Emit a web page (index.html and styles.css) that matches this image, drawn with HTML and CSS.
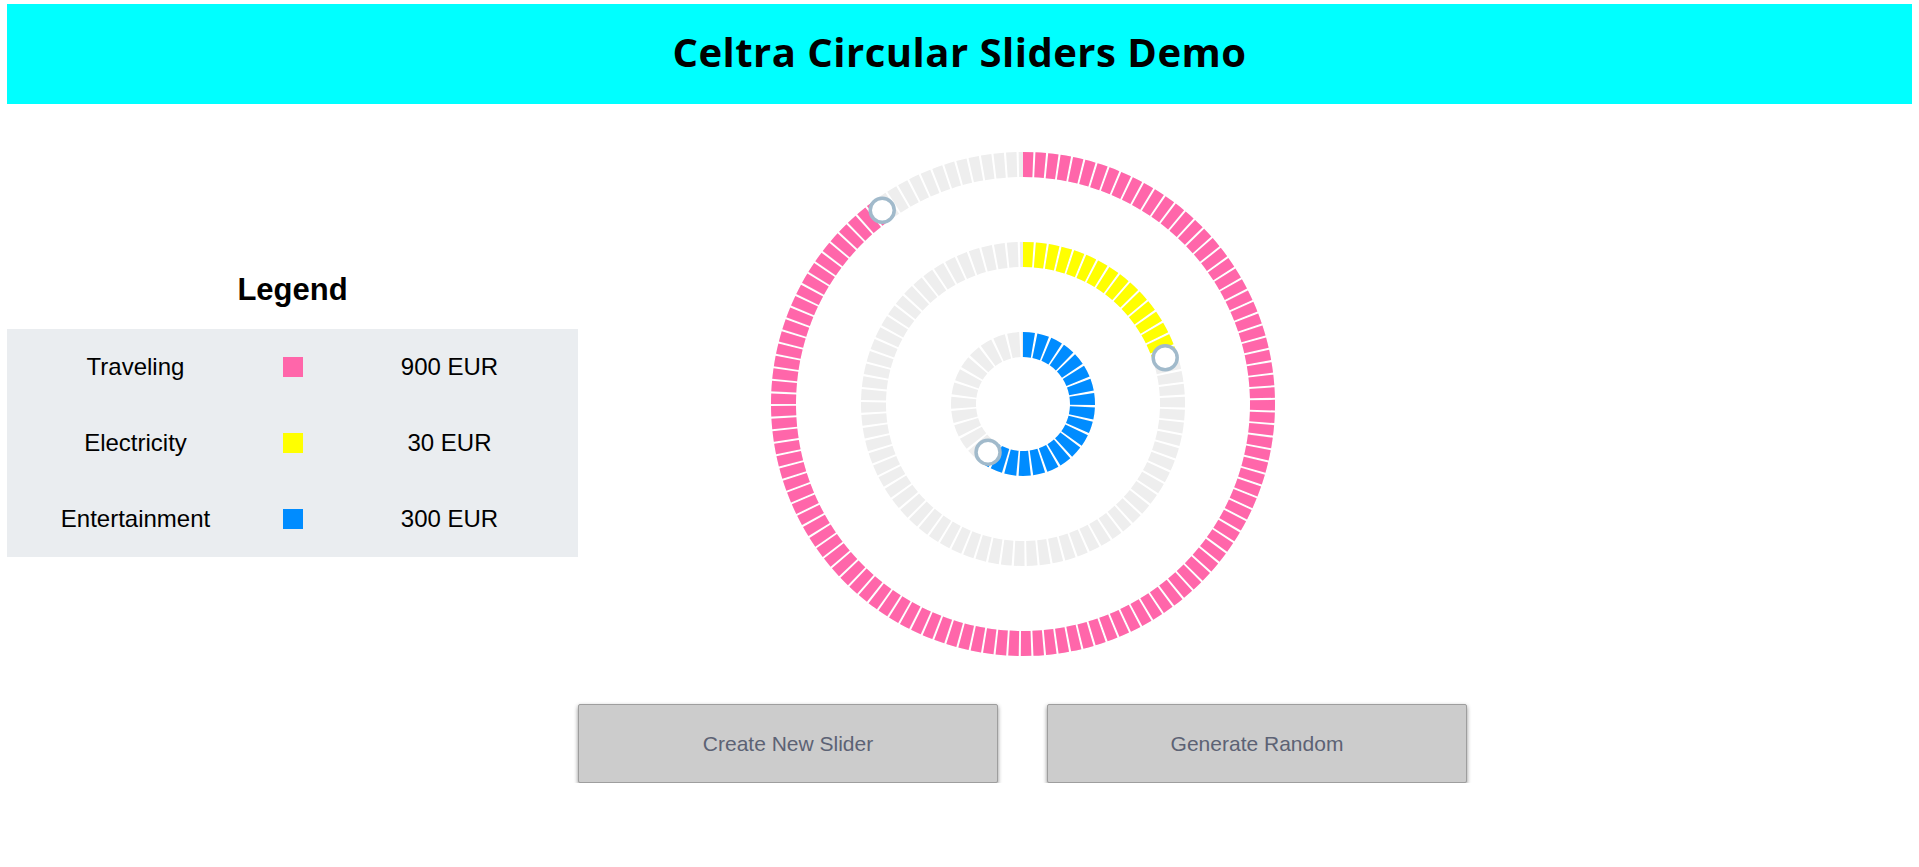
FILE: index.html
```html
<!DOCTYPE html>
<html lang="en">
<head>
<meta charset="utf-8">
<title>Celtra Circular Sliders Demo</title>
<link rel="stylesheet" href="styles.css">
</head>
<body>
<header class="header">
  <h1 class="title">Celtra Circular Sliders Demo</h1>
</header>
<main class="main">
  <section class="legend">
    <h2 class="legend-title">Legend</h2>
    <div class="legend-table">
      <div class="legend-row">
        <span class="legend-label">Traveling</span>
        <span class="swatch swatch-pink"></span>
        <span class="legend-value">900 EUR</span>
      </div>
      <div class="legend-row">
        <span class="legend-label">Electricity</span>
        <span class="swatch swatch-yellow"></span>
        <span class="legend-value">30 EUR</span>
      </div>
      <div class="legend-row">
        <span class="legend-label">Entertainment</span>
        <span class="swatch swatch-blue"></span>
        <span class="legend-value">300 EUR</span>
      </div>
    </div>
  </section>
  <section class="sliders">
    <svg class="slider-svg" width="520" height="520" viewBox="0 0 520 520">
      <g class="tracks" transform="rotate(-90 260 260)">
        <circle class="track" cx="260" cy="260" r="239.5"/>
        <circle class="track" cx="260" cy="260" r="149.5"/>
        <circle class="track" cx="260" cy="260" r="59.5"/>
      </g>
      <path class="arc arc-pink" d="M 260 20.5 A 239.5 239.5 0 1 1 119.23 66.24"/>
      <path class="arc arc-yellow" d="M 260 110.5 A 149.5 149.5 0 0 1 402.19 213.80"/>
      <path class="arc arc-blue" d="M 260 200.5 A 59.5 59.5 0 1 1 225.03 308.14"/>
      <circle class="handle" cx="119.23" cy="66.24" r="12"/>
      <circle class="handle" cx="402.19" cy="213.80" r="12"/>
      <circle class="handle" cx="225.03" cy="308.14" r="12"/>
    </svg>
    <div class="buttons">
      <button class="btn" type="button">Create New Slider</button>
      <button class="btn" type="button">Generate Random</button>
    </div>
  </section>
</main>
</body>
</html>
```
FILE: styles.css
```css
html, body {
  margin: 0;
  padding: 0;
  background: #ffffff;
}

body {
  font-family: "Liberation Sans", Arial, sans-serif;
  color: #000000;
}

.header {
  margin: 4px 7px 0 7px;
  height: 100px;
  background: #00ffff;
  display: flex;
  align-items: center;
  justify-content: center;
}

.title {
  margin: 0 0 4px 0;
  font-family: "Open Sans", "Noto Sans", sans-serif;
  font-weight: 700;
  font-size: 40px;
  letter-spacing: 0.5px;
  line-height: 1;
}

.main {
  display: flex;
  padding-left: 7px;
}

.legend {
  width: 571px;
  flex: none;
}

.legend-title {
  margin: 168px 0 0 0;
  font-size: 31px;
  line-height: 36px;
  font-weight: 700;
  text-align: center;
}

.legend-table {
  margin-top: 21px;
  background: #eaedf0;
  padding: 0 50px;
}

.legend-row {
  display: grid;
  grid-template-columns: repeat(3, 157px);
  height: 76px;
  align-items: center;
  justify-items: center;
  font-size: 24px;
}

.swatch {
  width: 20px;
  height: 20px;
  display: block;
}

.swatch-pink { background: #ff66aa; }
.swatch-yellow { background: #ffff00; }
.swatch-blue { background: #008cff; }

.sliders {
  width: 889px;
  flex: none;
  display: flex;
  flex-direction: column;
  align-items: center;
}

.slider-svg {
  display: block;
  margin-top: 40px;
}

.track,
.arc {
  fill: none;
  stroke-width: 25;
  stroke-dasharray: 10 2;
}

.track { stroke: #eeeeee; }
.arc-pink { stroke: #ff66aa; }
.arc-yellow { stroke: #ffff00; }
.arc-blue { stroke: #008cff; }

.handle {
  fill: #ffffff;
  stroke: #a1bacb;
  stroke-width: 3.5;
}

.buttons {
  margin-top: 40px;
  width: 889px;
  display: flex;
  justify-content: center;
  gap: 49px;
}

.btn {
  width: 420px;
  height: 79px;
  background: #cccccc;
  border: 1px solid #9e9e9e;
  border-radius: 2px;
  box-shadow: 0 2px 4px rgba(0, 0, 0, 0.45);
  font-family: "Liberation Sans", Arial, sans-serif;
  font-size: 21px;
  color: #5c6274;
  padding: 0;
}
```
